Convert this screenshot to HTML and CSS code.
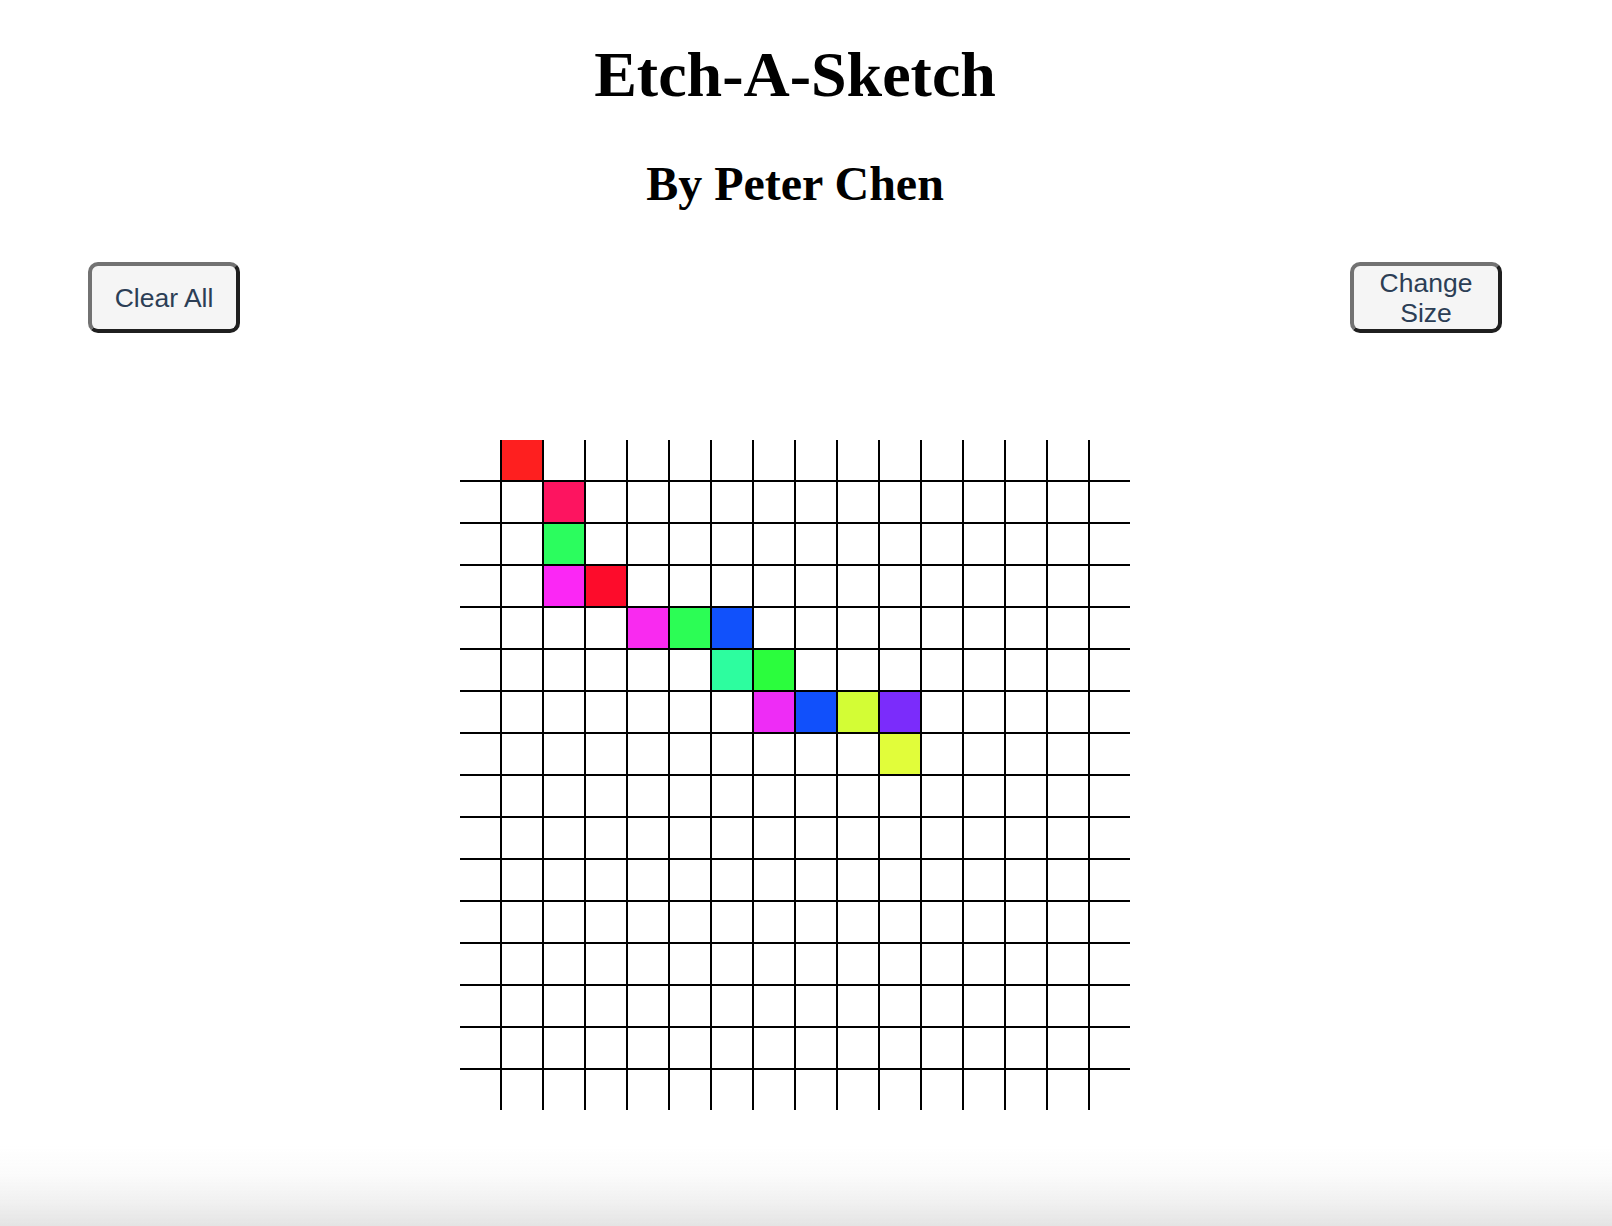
FILE: index.html
```html
<!DOCTYPE html>
<html lang="en">
<head>
<meta charset="utf-8">
<title>Etch-A-Sketch</title>
<link rel="stylesheet" href="styles.css">
</head>
<body>
<div class="page">
  <header class="header">
    <h1 class="title">Etch-A-Sketch</h1>
    <h2 class="subtitle">By Peter Chen</h2>
  </header>
  <div class="controls">
    <button class="btn">Clear All</button>
    <button class="btn">Change Size</button>
  </div>
  <div class="board">
    <div class="cell"></div><div class="cell" style="background:#fe1f1f"></div><div class="cell"></div><div class="cell"></div><div class="cell"></div><div class="cell"></div><div class="cell"></div><div class="cell"></div><div class="cell"></div><div class="cell"></div><div class="cell"></div><div class="cell"></div><div class="cell"></div><div class="cell"></div><div class="cell"></div><div class="cell"></div>
    <div class="cell"></div><div class="cell"></div><div class="cell" style="background:#fd1460"></div><div class="cell"></div><div class="cell"></div><div class="cell"></div><div class="cell"></div><div class="cell"></div><div class="cell"></div><div class="cell"></div><div class="cell"></div><div class="cell"></div><div class="cell"></div><div class="cell"></div><div class="cell"></div><div class="cell"></div>
    <div class="cell"></div><div class="cell"></div><div class="cell" style="background:#2bfd5e"></div><div class="cell"></div><div class="cell"></div><div class="cell"></div><div class="cell"></div><div class="cell"></div><div class="cell"></div><div class="cell"></div><div class="cell"></div><div class="cell"></div><div class="cell"></div><div class="cell"></div><div class="cell"></div><div class="cell"></div>
    <div class="cell"></div><div class="cell"></div><div class="cell" style="background:#fb27f5"></div><div class="cell" style="background:#fd0c2b"></div><div class="cell"></div><div class="cell"></div><div class="cell"></div><div class="cell"></div><div class="cell"></div><div class="cell"></div><div class="cell"></div><div class="cell"></div><div class="cell"></div><div class="cell"></div><div class="cell"></div><div class="cell"></div>
    <div class="cell"></div><div class="cell"></div><div class="cell"></div><div class="cell"></div><div class="cell" style="background:#f92af0"></div><div class="cell" style="background:#2cfd55"></div><div class="cell" style="background:#1151fb"></div><div class="cell"></div><div class="cell"></div><div class="cell"></div><div class="cell"></div><div class="cell"></div><div class="cell"></div><div class="cell"></div><div class="cell"></div><div class="cell"></div>
    <div class="cell"></div><div class="cell"></div><div class="cell"></div><div class="cell"></div><div class="cell"></div><div class="cell"></div><div class="cell" style="background:#2dfd9f"></div><div class="cell" style="background:#2bfd3d"></div><div class="cell"></div><div class="cell"></div><div class="cell"></div><div class="cell"></div><div class="cell"></div><div class="cell"></div><div class="cell"></div><div class="cell"></div>
    <div class="cell"></div><div class="cell"></div><div class="cell"></div><div class="cell"></div><div class="cell"></div><div class="cell"></div><div class="cell"></div><div class="cell" style="background:#ee2cf6"></div><div class="cell" style="background:#1150fb"></div><div class="cell" style="background:#d3fd35"></div><div class="cell" style="background:#7b2cfb"></div><div class="cell"></div><div class="cell"></div><div class="cell"></div><div class="cell"></div><div class="cell"></div>
    <div class="cell"></div><div class="cell"></div><div class="cell"></div><div class="cell"></div><div class="cell"></div><div class="cell"></div><div class="cell"></div><div class="cell"></div><div class="cell"></div><div class="cell"></div><div class="cell" style="background:#e1fd3a"></div><div class="cell"></div><div class="cell"></div><div class="cell"></div><div class="cell"></div><div class="cell"></div>
    <div class="cell"></div><div class="cell"></div><div class="cell"></div><div class="cell"></div><div class="cell"></div><div class="cell"></div><div class="cell"></div><div class="cell"></div><div class="cell"></div><div class="cell"></div><div class="cell"></div><div class="cell"></div><div class="cell"></div><div class="cell"></div><div class="cell"></div><div class="cell"></div>
    <div class="cell"></div><div class="cell"></div><div class="cell"></div><div class="cell"></div><div class="cell"></div><div class="cell"></div><div class="cell"></div><div class="cell"></div><div class="cell"></div><div class="cell"></div><div class="cell"></div><div class="cell"></div><div class="cell"></div><div class="cell"></div><div class="cell"></div><div class="cell"></div>
    <div class="cell"></div><div class="cell"></div><div class="cell"></div><div class="cell"></div><div class="cell"></div><div class="cell"></div><div class="cell"></div><div class="cell"></div><div class="cell"></div><div class="cell"></div><div class="cell"></div><div class="cell"></div><div class="cell"></div><div class="cell"></div><div class="cell"></div><div class="cell"></div>
    <div class="cell"></div><div class="cell"></div><div class="cell"></div><div class="cell"></div><div class="cell"></div><div class="cell"></div><div class="cell"></div><div class="cell"></div><div class="cell"></div><div class="cell"></div><div class="cell"></div><div class="cell"></div><div class="cell"></div><div class="cell"></div><div class="cell"></div><div class="cell"></div>
    <div class="cell"></div><div class="cell"></div><div class="cell"></div><div class="cell"></div><div class="cell"></div><div class="cell"></div><div class="cell"></div><div class="cell"></div><div class="cell"></div><div class="cell"></div><div class="cell"></div><div class="cell"></div><div class="cell"></div><div class="cell"></div><div class="cell"></div><div class="cell"></div>
    <div class="cell"></div><div class="cell"></div><div class="cell"></div><div class="cell"></div><div class="cell"></div><div class="cell"></div><div class="cell"></div><div class="cell"></div><div class="cell"></div><div class="cell"></div><div class="cell"></div><div class="cell"></div><div class="cell"></div><div class="cell"></div><div class="cell"></div><div class="cell"></div>
    <div class="cell"></div><div class="cell"></div><div class="cell"></div><div class="cell"></div><div class="cell"></div><div class="cell"></div><div class="cell"></div><div class="cell"></div><div class="cell"></div><div class="cell"></div><div class="cell"></div><div class="cell"></div><div class="cell"></div><div class="cell"></div><div class="cell"></div><div class="cell"></div>
    <div class="cell"></div><div class="cell"></div><div class="cell"></div><div class="cell"></div><div class="cell"></div><div class="cell"></div><div class="cell"></div><div class="cell"></div><div class="cell"></div><div class="cell"></div><div class="cell"></div><div class="cell"></div><div class="cell"></div><div class="cell"></div><div class="cell"></div><div class="cell"></div>
  </div>
</div>
<div class="bottom-fade"></div>
</body>
</html>
```

FILE: styles.css
```css
html, body {
  margin: 0;
  padding: 0;
  background: #ffffff;
  overflow: hidden;
}

.page {
  width: 1590px;
  padding-top: 38px;
  font-family: "Liberation Serif", "Times New Roman", serif;
  color: #000;
}

.header {
  display: flex;
  flex-direction: column;
  align-items: center;
}

.title {
  margin: 0;
  font-size: 64px;
  line-height: 74px;
  font-weight: bold;
}

.subtitle {
  margin: 44px 0 0;
  font-size: 48px;
  line-height: 55px;
  font-weight: bold;
}

.controls {
  display: flex;
  justify-content: space-between;
  padding: 0 88px;
  margin-top: 51px;
}

.btn {
  width: 152px;
  height: 71px;
  box-sizing: border-box;
  padding: 0 16px;
  background: #f5f5f5;
  border-style: solid;
  border-width: 4px;
  border-color: #727272 #1f1f1f #1f1f1f #727272;
  border-radius: 10px;
  font-family: "Liberation Sans", Arial, Helvetica, sans-serif;
  font-size: 26.5px;
  line-height: 30px;
  color: #2c3e55;
  text-align: center;
}

.board {
  width: 670px;
  height: 670px;
  margin: 107px auto 0;
  display: grid;
  grid-template-columns: repeat(16, 1fr);
  grid-template-rows: repeat(16, 1fr);
  gap: 2px;
  background: #000;
}

.cell {
  background: #ffffff;
}

.bottom-fade {
  position: fixed;
  left: 0;
  right: 0;
  bottom: 0;
  height: 80px;
  background: linear-gradient(to bottom, rgba(229, 229, 229, 0) 0%, rgba(229, 229, 229, 0.15) 35%, rgba(229, 229, 229, 0.55) 70%, #e4e4e4 100%);
  pointer-events: none;
}
```
